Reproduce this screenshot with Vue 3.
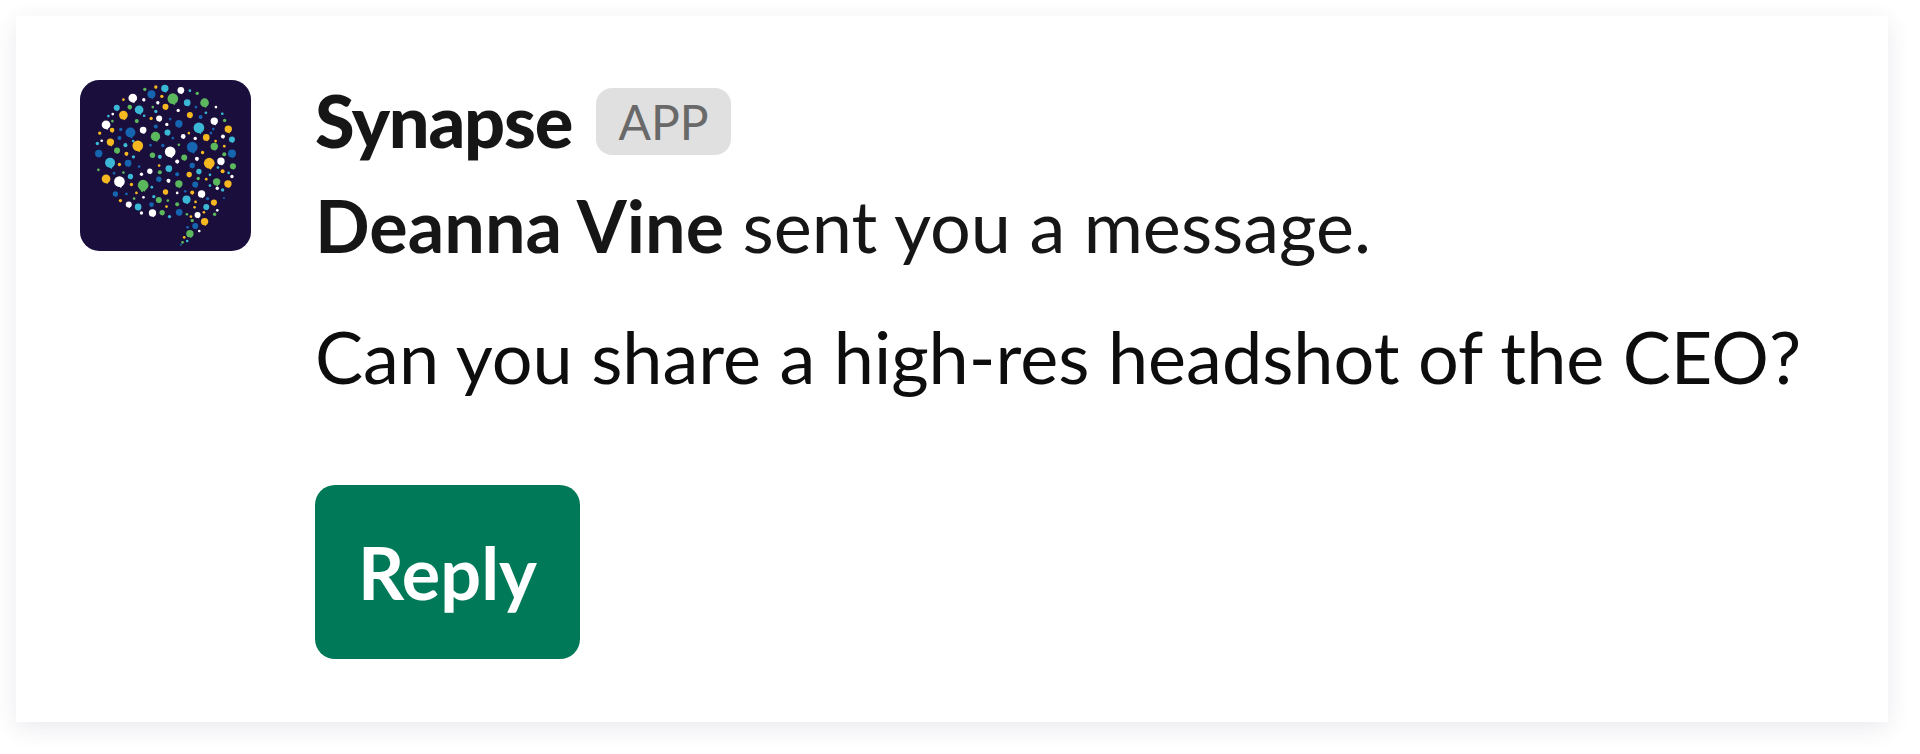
<template>
  <div class="page">
    <div class="card">
      <svg class="avatar" viewBox="60 60 512 512" aria-hidden="true">
        <rect x="60" y="60" width="512" height="512" rx="58" fill="#1a0f3c" />
        <g v-for="(d, i) in dots" :key="i" :fill="colors[d[3]]">
          <circle :cx="d[0]" :cy="d[1]" :r="d[2] + 1" />
          <path :d="tail(d)" />
        </g>
      </svg>
      <div class="body">
        <div class="head">
          <span class="name">Synapse</span>
          <span class="badge">APP</span>
        </div>
        <p class="line"><b>Deanna Vine</b> sent you a message.</p>
        <p class="line msg">Can you share a high-res headshot of the CEO?</p>
        <button class="reply">Reply</button>
      </div>
    </div>
  </div>
</template>

<script setup>
const colors = { w: '#ffffff', b: '#1565b0', c: '#3bb8d6', g: '#5cb85c', y: '#f5b820' }

// x, y, radius, colour
const dots = [
  [254, 88, 4, 'g'], [287, 81, 4, 'y'], [314, 85, 10, 'c'], [362, 91, 9, 'w'], [389, 92, 3, 'c'], [411, 100, 4, 'g'],
  [218, 114, 12, 'w'], [274, 103, 11, 'b'], [305, 109, 4, 'y'], [338, 116, 15, 'g'], [381, 128, 9, 'c'], [433, 128, 12, 'g'],
  [190, 119, 3, 'y'], [251, 119, 4, 'w'], [293, 128, 4, 'w'], [316, 140, 8, 'y'], [170, 143, 8, 'c'], [209, 141, 6, 'g'],
  [237, 149, 12, 'c'], [278, 141, 3, 'g'], [354, 151, 4, 'w'], [407, 141, 3, 'b'], [467, 141, 3, 'w'], [287, 154, 4, 'c'],
  [158, 162, 3, 'w'], [190, 165, 12, 'y'], [252, 167, 3, 'c'], [389, 165, 8, 'y'], [437, 158, 3, 'c'], [486, 161, 3, 'c'],
  [145, 168, 3, 'c'], [273, 175, 4, 'y'], [297, 175, 8, 'w'], [421, 171, 5, 'b'], [230, 183, 5, 'g'], [157, 183, 3, 'g'],
  [462, 183, 10, 'w'], [493, 181, 4, 'g'], [138, 194, 12, 'w'], [320, 193, 4, 'w'], [356, 191, 10, 'b'], [330, 177, 3, 'b'],
  [156, 210, 6, 'y'], [287, 199, 5, 'b'], [182, 208, 4, 'b'], [416, 203, 15, 'c'], [504, 207, 10, 'y'], [459, 207, 3, 'b'],
  [211, 217, 14, 'b'], [249, 210, 9, 'w'], [322, 217, 8, 'c'], [386, 219, 3, 'y'], [119, 219, 4, 'y'], [452, 219, 3, 'b'],
  [286, 229, 13, 'g'], [369, 229, 6, 'w'], [438, 232, 9, 'y'], [488, 229, 5, 'w'], [178, 234, 5, 'b'], [338, 234, 3, 'b'],
  [405, 235, 4, 'w'], [515, 238, 8, 'c'], [125, 242, 3, 'w'], [151, 246, 10, 'y'], [219, 243, 3, 'c'], [466, 243, 3, 'y'],
  [112, 250, 4, 'c'], [196, 255, 5, 'c'], [233, 257, 15, 'y'], [271, 255, 3, 'b'], [308, 256, 4, 'b'], [356, 254, 3, 'g'],
  [396, 261, 15, 'b'], [462, 259, 10, 'g'], [492, 258, 3, 'y'], [171, 271, 8, 'g'], [330, 275, 15, 'w'], [427, 277, 4, 'y'],
  [116, 280, 10, 'b'], [199, 281, 5, 'y'], [277, 285, 7, 'g'], [299, 290, 5, 'c'], [372, 292, 8, 'g'], [220, 290, 4, 'c'],
  [492, 282, 5, 'g'], [515, 280, 11, 'b'], [410, 296, 5, 'w'], [351, 304, 5, 'w'], [150, 308, 14, 'c'], [204, 309, 9, 'b'],
  [447, 309, 15, 'y'], [482, 303, 10, 'w'], [178, 313, 4, 'y'], [297, 316, 3, 'y'], [518, 318, 8, 'g'], [396, 316, 7, 'b'],
  [237, 319, 3, 'b'], [473, 322, 3, 'c'], [115, 329, 3, 'g'], [326, 325, 9, 'c'], [269, 333, 7, 'w'], [416, 334, 7, 'c'],
  [487, 333, 5, 'y'], [299, 336, 5, 'g'], [162, 339, 3, 'b'], [190, 337, 3, 'g'], [351, 342, 5, 'b'], [244, 342, 4, 'w'],
  [387, 343, 7, 'y'], [449, 344, 3, 'c'], [505, 338, 3, 'c'], [211, 349, 7, 'c'], [515, 349, 4, 'w'], [138, 356, 12, 'y'],
  [178, 364, 15, 'w'], [296, 357, 7, 'b'], [414, 355, 4, 'g'], [438, 357, 3, 'y'], [325, 362, 5, 'w'], [469, 365, 10, 'g'],
  [249, 375, 15, 'g'], [356, 371, 10, 'g'], [214, 373, 4, 'y'], [405, 373, 8, 'b'], [503, 371, 10, 'y'], [449, 376, 3, 'c'],
  [275, 381, 3, 'c'], [487, 389, 4, 'c'], [471, 384, 4, 'w'], [316, 395, 7, 'y'], [375, 393, 3, 'b'], [166, 401, 7, 'b'],
  [229, 398, 3, 'y'], [199, 401, 3, 'b'], [351, 398, 3, 'w'], [396, 397, 5, 'y'], [424, 401, 10, 'w'], [246, 391, 3, 'g'],
  [281, 409, 4, 'c'], [250, 411, 3, 'w'], [296, 419, 8, 'g'], [222, 415, 3, 'g'], [442, 415, 4, 'b'], [491, 413, 2, 'b'],
  [379, 418, 11, 'c'], [181, 421, 4, 'y'], [461, 427, 8, 'y'], [323, 421, 3, 'g'], [406, 425, 3, 'y'], [206, 433, 8, 'w'],
  [274, 433, 6, 'b'], [351, 432, 5, 'g'], [234, 440, 9, 'c'], [319, 439, 3, 'y'], [438, 440, 8, 'c'], [403, 441, 3, 'y'],
  [471, 450, 3, 'w'], [244, 458, 4, 'w'], [277, 458, 10, 'w'], [306, 457, 7, 'g'], [357, 456, 9, 'b'], [431, 456, 3, 'y'],
  [412, 464, 8, 'w'], [463, 462, 4, 'g'], [328, 469, 4, 'c'], [380, 462, 3, 'g'], [392, 469, 3, 'y'], [396, 481, 4, 'g'],
  [433, 484, 10, 'y'], [405, 497, 8, 'b'], [382, 501, 3, 'b'], [417, 512, 3, 'w'], [389, 520, 10, 'g'], [372, 531, 3, 'y'],
  [381, 542, 3, 'c'], [367, 546, 3, 'g'], [362, 553, 2, 'b']
]

// each dot is a tiny speech bubble, so it gets a small tip below it
function tail(d) {
  const [x, y, r] = d
  return `M${x - r * 0.5} ${y + r * 0.7}L${x + r * 0.35} ${y + r * 1.3}L${x + r * 0.6} ${y + r * 0.6}Z`
}
</script>

<style scoped>
.page {
  height: 754px;
  padding: 16px 32px 32px 16px;
  box-sizing: border-box;
  font-family: Lato, "Open Sans", sans-serif;
}
.card {
  height: 706px;
  padding: 64px;
  box-sizing: border-box;
  display: flex;
  gap: 64px;
  background: #fff;
  box-shadow: 0 6px 22px rgba(50, 50, 90, 0.1);
  color: #161616;
}
.avatar {
  width: 171px;
  height: 171px;
  flex: none;
  display: block;
}
.body {
  flex: 1;
  margin-top: -12px;
}
.head {
  display: flex;
  align-items: center;
  gap: 24px;
  height: 105px;
}
.name {
  font-size: 72px;
  font-weight: 900;
  letter-spacing: -1.2px;
  line-height: 105px;
}
.badge {
  width: 135px;
  height: 67px;
  margin-top: 2px;
  border-radius: 16px;
  background: #e0e0e0;
  color: #696969;
  font-size: 48px;
  line-height: 67px;
  text-align: center;
}
.line {
  margin: 0;
  font-size: 72px;
  line-height: 105px;
}
.line b {
  font-weight: 700;
}
.msg {
  margin-top: 26px;
  color: #0d0d0d;
}
.reply {
  display: block;
  width: 265px;
  height: 174px;
  margin-top: 76px;
  padding: 0;
  border: 0;
  border-radius: 20px;
  background: #007958;
  color: #fff;
  font-family: inherit;
  font-size: 72px;
  font-weight: 700;
}
</style>

<style>
html, body {
  background: #fff;
}
</style>
